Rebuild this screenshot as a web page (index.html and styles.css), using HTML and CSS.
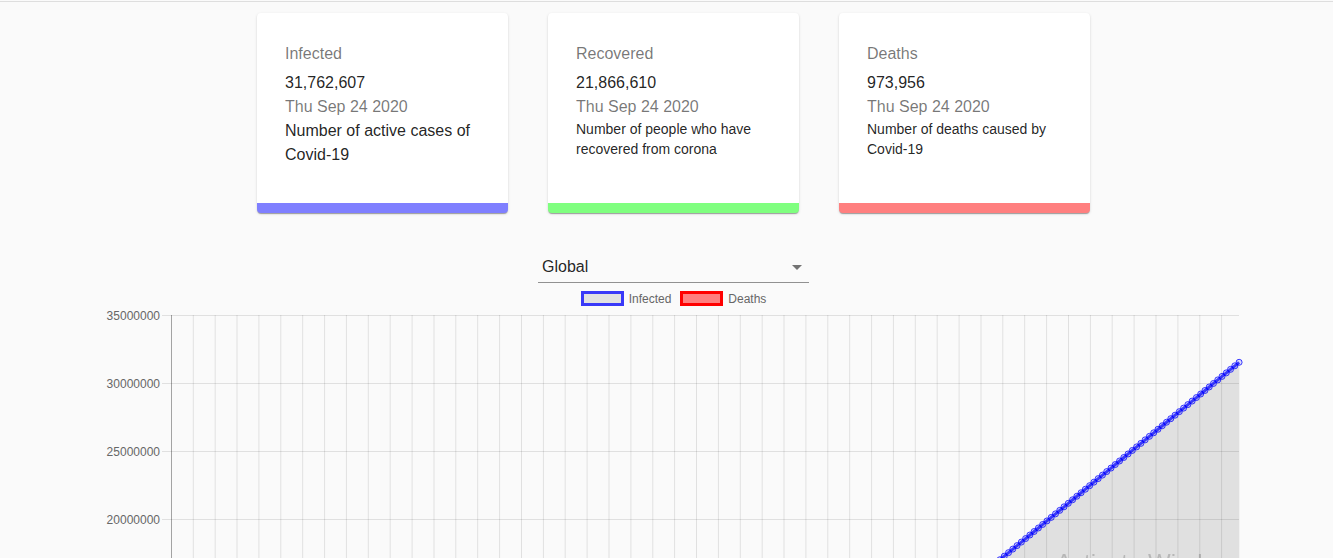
FILE: index.html
```html
<!DOCTYPE html>
<html>
<head>
<meta charset="utf-8">
<link rel="stylesheet" href="styles.css">
</head>
<body>
<div class="top-edge"></div>
<div class="main">
  <div class="cards">
    <div class="card card-infected">
      <div class="card-title">Infected</div>
      <div class="card-value">31,762,607</div>
      <div class="card-date">Thu Sep 24 2020</div>
      <div class="card-desc">Number of active cases of Covid-19</div>
    </div>
    <div class="card card-recovered">
      <div class="card-title">Recovered</div>
      <div class="card-value">21,866,610</div>
      <div class="card-date">Thu Sep 24 2020</div>
      <div class="card-desc small">Number of people who have recovered from corona</div>
    </div>
    <div class="card card-deaths">
      <div class="card-title">Deaths</div>
      <div class="card-value">973,956</div>
      <div class="card-date">Thu Sep 24 2020</div>
      <div class="card-desc small">Number of deaths caused by Covid-19</div>
    </div>
  </div>

  <div class="select">
    <span class="select-value">Global</span>
    <svg class="select-icon" viewBox="0 0 24 24" width="24" height="24"><path d="M7 10l5 5 5-5z"/></svg>
  </div>

  <div class="legend">
    <div class="legend-item"><span class="legend-box box-infected"></span><span class="legend-label">Infected</span></div>
    <div class="legend-item"><span class="legend-box box-deaths"></span><span class="legend-label">Deaths</span></div>
  </div>
</div>

<svg class="chart" width="1333" height="252" viewBox="0 306 1333 252">
  <defs>
    <marker id="pt" markerWidth="8" markerHeight="8" refX="4" refY="4" markerUnits="userSpaceOnUse">
      <circle cx="4" cy="4" r="3" fill="rgba(0,0,255,0.12)" stroke="rgba(0,0,255,0.75)" stroke-width="1"/>
    </marker>
  </defs>
  <g class="grid">
    <path d="M162 315.5H1239M162 383.5H1239M162 451.5H1239M162 519.5H1239"/>
    <path d="M193.3 315V558M215.2 315V558M237 315V558M258.9 315V558M280.8 315V558M302.7 315V558M324.6 315V558M346.4 315V558M368.3 315V558M390.2 315V558M412.1 315V558M434 315V558M455.8 315V558M477.7 315V558M499.6 315V558M521.5 315V558M543.4 315V558M565.2 315V558M587.1 315V558M609 315V558M630.9 315V558M652.8 315V558M674.6 315V558M696.5 315V558M718.4 315V558M740.3 315V558M762.2 315V558M784 315V558M805.9 315V558M827.8 315V558M849.7 315V558M871.6 315V558M893.4 315V558M915.3 315V558M937.2 315V558M959.1 315V558M981 315V558M1002.8 315V558M1024.7 315V558M1046.6 315V558M1068.5 315V558M1090.4 315V558M1112.2 315V558M1134.1 315V558M1156 315V558M1177.9 315V558M1199.8 315V558M1221.6 315V558"/>
  </g>
  <path class="axis" d="M171.5 315V558"/>
  <g class="ylabels">
    <text x="160" y="315.5">35000000</text>
    <text x="160" y="383.5">30000000</text>
    <text x="160" y="451.5">25000000</text>
    <text x="160" y="519.5">20000000</text>
  </g>
  <path class="area" d="M982.9 573.8L1239.3 362.3L1239.3 600L982.9 600Z"/>
  <path class="line" d="M982.9 573.8l4.27 -3.525l4.27 -3.525l4.27 -3.525l4.27 -3.525l4.27 -3.525l4.27 -3.525l4.27 -3.525l4.27 -3.525l4.27 -3.525l4.27 -3.525l4.27 -3.525l4.27 -3.525l4.27 -3.525l4.27 -3.525l4.27 -3.525l4.27 -3.525l4.27 -3.525l4.27 -3.525l4.27 -3.525l4.27 -3.525l4.27 -3.525l4.27 -3.525l4.27 -3.525l4.27 -3.525l4.27 -3.525l4.27 -3.525l4.27 -3.525l4.27 -3.525l4.27 -3.525l4.27 -3.525l4.27 -3.525l4.27 -3.525l4.27 -3.525l4.27 -3.525l4.27 -3.525l4.27 -3.525l4.27 -3.525l4.27 -3.525l4.27 -3.525l4.27 -3.525l4.27 -3.525l4.27 -3.525l4.27 -3.525l4.27 -3.525l4.27 -3.525l4.27 -3.525l4.27 -3.525l4.27 -3.525l4.27 -3.525l4.27 -3.525l4.27 -3.525l4.27 -3.525l4.27 -3.525l4.27 -3.525l4.27 -3.525l4.27 -3.525l4.27 -3.525l4.27 -3.525l4.27 -3.525l4.27 -3.525"/>
</svg>

<div class="watermark">Activate Windows</div>
</body>
</html>
```

FILE: styles.css
```css
html, body {
  margin: 0;
  padding: 0;
  background: #fafafa;
  font-family: "Liberation Sans", Arial, Helvetica, sans-serif;
  overflow: hidden;
}

.top-edge {
  height: 1px;
  margin-top: 1px;
  background: #dedede;
}

.main {
  padding-left: 14px;
}

.cards {
  width: 833px;
  margin: 11px auto 0;
  display: flex;
  gap: 40px;
}

.card {
  width: 251px;
  height: 200px;
  box-sizing: border-box;
  background: #fff;
  border-radius: 4px;
  padding: 29px 28px 0;
  border-bottom: 10px solid;
  box-shadow: 0 2px 1px -1px rgba(0,0,0,0.2), 0 1px 1px 0 rgba(0,0,0,0.14), 0 1px 3px 0 rgba(0,0,0,0.12);
}

.card-infected { border-bottom-color: #7f7fff; }
.card-recovered { border-bottom-color: #7fff7f; }
.card-deaths { border-bottom-color: #ff7f7f; }

.card-title {
  font-size: 16px;
  line-height: 24px;
  color: rgba(0,0,0,0.54);
  margin-bottom: 5px;
}

.card-value {
  font-size: 16px;
  line-height: 24px;
  color: rgba(0,0,0,0.87);
}

.card-date {
  font-size: 16px;
  line-height: 24px;
  color: rgba(0,0,0,0.54);
}

.card-desc {
  font-size: 16px;
  line-height: 24px;
  color: rgba(0,0,0,0.87);
}

.card-desc.small {
  font-size: 14px;
  line-height: 20px;
}

.select {
  width: 271px;
  margin: 38px auto 0;
  display: flex;
  align-items: center;
  justify-content: space-between;
  height: 31px;
  box-sizing: content-box;
  border-bottom: 1px solid rgba(0,0,0,0.42);
}

.select-value {
  padding-left: 4px;
  font-size: 16px;
  line-height: 19px;
  color: rgba(0,0,0,0.87);
}

.select-icon {
  fill: rgba(0,0,0,0.54);
  display: block;
}

.legend {
  margin-top: 8px;
  height: 15px;
  display: flex;
  justify-content: center;
  align-items: center;
  gap: 9px;
}

.legend-item {
  display: flex;
  align-items: center;
  gap: 5px;
}

.legend-box {
  width: 37px;
  height: 9px;
  border: 3px solid;
}

.box-infected {
  border-color: rgba(0,0,255,0.75);
  background: #e1e1e1;
}

.box-deaths {
  border-color: #ff0000;
  background: #ff7f7f;
}

.legend-label {
  font-size: 12px;
  color: #666;
}

.chart {
  display: block;
}

.grid path {
  stroke: rgba(0,0,0,0.1);
  stroke-width: 1;
  fill: none;
}

.axis {
  stroke: rgba(0,0,0,0.35);
  stroke-width: 1;
}

.ylabels text {
  font-family: "Liberation Sans", Arial, sans-serif;
  font-size: 12px;
  fill: #666;
  text-anchor: end;
  dominant-baseline: central;
}

.area {
  fill: rgba(0,0,0,0.1);
}

.line {
  fill: none;
  stroke: rgba(0,0,255,0.72);
  stroke-width: 3;
  marker-start: url(#pt);
  marker-mid: url(#pt);
  marker-end: url(#pt);
}

.watermark {
  position: fixed;
  left: 1056px;
  top: 551px;
  font-family: "Liberation Sans", Arial, sans-serif;
  font-size: 24px;
  line-height: 24px;
  color: rgba(0,0,0,0.18);
  white-space: nowrap;
}
```
